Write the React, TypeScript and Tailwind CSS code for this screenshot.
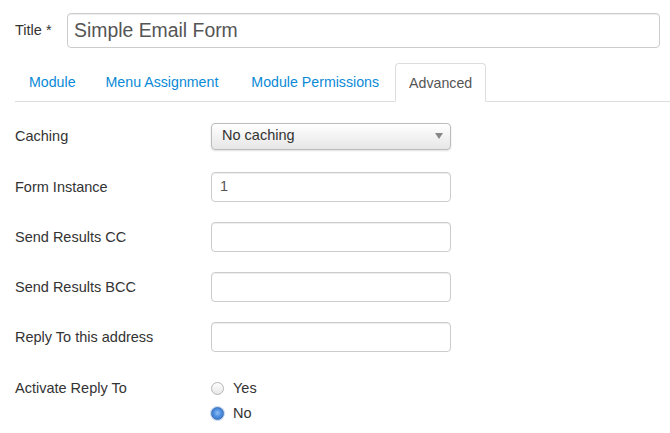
import React from "react";

const font = { fontFamily: '"Liberation Sans", Arial, sans-serif' };

function Row({ label, children, h = "h-[30px]" }: { label: string; children: React.ReactNode; h?: string }) {
  return (
    <div className={`flex items-center ${h}`}>
      <div className="w-[196px] text-[14.5px] text-[#333] pt-[2px]">{label}</div>
      {children}
    </div>
  );
}

function TextInput({ value = "" }: { value?: string }) {
  return (
    <div className="w-[240px] h-[30px] border border-[#ccc] rounded-[4px] bg-white flex items-center px-[8px] text-[14.5px] text-[#555] shadow-[inset_0_1px_1px_rgba(0,0,0,0.075)]">
      {value}
    </div>
  );
}

function Radio({ checked }: { checked: boolean }) {
  return checked ? (
    <span className="w-[13px] h-[13px] rounded-full border border-[#3b6fb4] bg-[radial-gradient(circle_at_50%_45%,#8fc0f5_0%,#4f8fe0_45%,#2f6fcc_100%)] shadow-[0_0_0_1px_rgba(160,190,230,0.6)] inline-block" />
  ) : (
    <span className="w-[13px] h-[13px] rounded-full border border-[#b5b5b5] bg-[linear-gradient(#fdfdfd,#e8e8e8)] inline-block" />
  );
}

export default function App() {
  return (
    <div className="w-[670px] h-[433px] bg-white overflow-hidden" style={font}>
      <div className="pl-[15px] pt-[13px]">
        {/* Title */}
        <div className="flex items-center pr-[10px]">
          <div className="w-[52px] text-[14.5px] text-[#333]">Title *</div>
          <div className="flex-1 h-[35px] border border-[#ccc] rounded-[4px] flex items-center px-[6px] text-[19.4px] text-[#555] shadow-[inset_0_1px_1px_rgba(0,0,0,0.075)]">
            Simple Email Form
          </div>
        </div>

        {/* Tabs */}
        <div className="mt-[15px] flex items-end border-b border-[#ddd] h-[39px]">
          <div className="px-[14px] pt-[2px] h-[38px] flex items-center text-[14.2px] text-[#0a8ad6] mr-[2px]">Module</div>
          <div className="px-[14px] pt-[2px] h-[38px] flex items-center text-[14.2px] text-[#0a8ad6] mr-[5px]">Menu Assignment</div>
          <div className="px-[14px] pt-[2px] h-[38px] flex items-center text-[14.2px] text-[#0a8ad6] mr-[2px]">Module Permissions</div>
          <div className="px-[13px] pt-[2px] h-[39px] -mb-px flex items-center text-[14.2px] text-[#555] bg-white border border-[#ddd] border-b-white rounded-t-[4px]">
            Advanced
          </div>
        </div>

        {/* Form */}
        <div className="mt-[20px] flex flex-col">
          <Row label="Caching" h="h-[28px]">
            <div className="w-[240px] h-[27px] border border-[#bbb] rounded-[4px] bg-[linear-gradient(#ffffff,#e6e6e6)] shadow-[0_1px_2px_rgba(0,0,0,0.12)] flex items-center justify-between pl-[10px] pr-[7px] text-[14.5px] text-[#333]">
              <span>No caching</span>
              <svg width="8" height="6" viewBox="0 0 8 6"><path d="M0 0 L8 0 L4 6 Z" fill="#888" /></svg>
            </div>
          </Row>
          <div className="mt-[22px]">
            <Row label="Form Instance"><TextInput value="1" /></Row>
          </div>
          <div className="mt-[20px]">
            <Row label="Send Results CC"><TextInput /></Row>
          </div>
          <div className="mt-[20px]">
            <Row label="Send Results BCC"><TextInput /></Row>
          </div>
          <div className="mt-[20px]">
            <Row label="Reply To this address"><TextInput /></Row>
          </div>
          <div className="mt-[24px] flex items-start">
            <div className="w-[196px] text-[14.5px] text-[#333] leading-[25px]">Activate Reply To</div>
            <div className="flex flex-col">
              <div className="h-[25px] flex items-center gap-[9px] text-[14.5px] text-[#333]">
                <Radio checked={false} />
                <span>Yes</span>
              </div>
              <div className="h-[25px] flex items-center gap-[9px] text-[14.5px] text-[#333]">
                <Radio checked={true} />
                <span>No</span>
              </div>
            </div>
          </div>
        </div>
      </div>
    </div>
  );
}
